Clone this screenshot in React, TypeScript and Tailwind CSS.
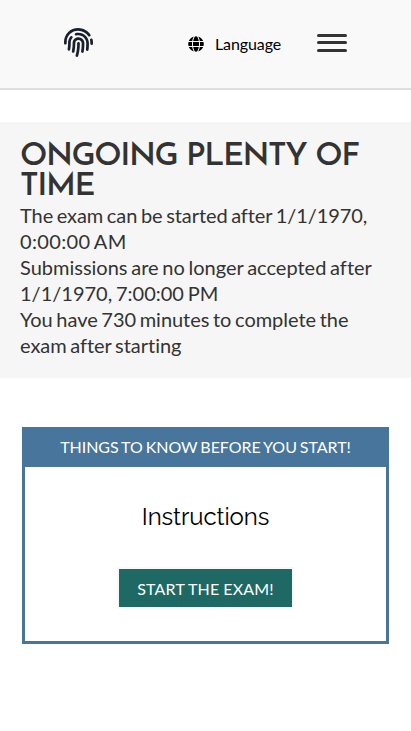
import { FaFingerprint, FaGlobe } from "react-icons/fa";

export default function App() {
  return (
    <div className="min-h-[731px] bg-white font-['Lato',sans-serif] text-black [font-variant-ligatures:none]">
      <header className="flex h-[90px] items-start border-b-2 border-[#dedede] bg-[#f9f9f9]">
        <FaFingerprint className="mt-7 ml-16 size-[29px] text-[#1a202c]" />
        <button className="mt-8 ml-[95px] flex items-center">
          <FaGlobe className="size-4" />
          <span className="ml-[11px] w-[66px] text-left text-base leading-6 tracking-[-0.1px]">Language</span>
        </button>
        <button className="mt-[34px] ml-9 flex w-[30px] flex-col" aria-label="Menu">
          <span className="h-[3px] w-full rounded-full bg-[#333]" />
          <span className="mt-1 h-[3px] w-full rounded-full bg-[#333]" />
          <span className="mt-[5px] h-[3px] w-full rounded-full bg-[#333]" />
        </button>
      </header>
      <section className="mt-8 h-64 bg-[#f6f6f6] px-5 pt-5 text-[#333]">
        <h1 className="font-['Josefin_Sans','Lato',sans-serif] text-[32px] leading-[30px] font-semibold tracking-[-1.43px]">ONGOING PLENTY OF TIME</h1>
        <div className="text-xl leading-[26px] [word-spacing:-1.4px]">
          <p>
            <span className="tracking-[-0.08px]">The exam can be started after 1/1/1970, </span>
            <span className="tracking-[0.35px]">0:00:00 AM</span>
          </p>
          <p>Submissions are no longer accepted after 1/1/1970, 7:00:00 PM</p>
          <p className="tracking-[-0.04px]">You have 730 minutes to complete the exam after starting</p>
        </div>
      </section>
      <main className="mx-[22px] mt-[49px] h-[217px] border-[3px] border-[#48759b] text-center">
        <h2 className="h-[37px] bg-[#48759b] pt-[5px] text-base leading-6 tracking-[-0.04px] text-white [word-spacing:-1.1px]">THINGS TO KNOW BEFORE YOU START!</h2>
        <p className="mt-8 font-['Raleway','Lato',sans-serif] text-2xl leading-9 tracking-[-0.1px]">Instructions</p>
        <button className="mt-8 h-[42px] w-[177px] border-2 border-[#f7f8fa] bg-[#1f6964] pt-0.5 text-base tracking-[0.2px] text-white [word-spacing:-0.5px]">START THE EXAM!</button>
      </main>
    </div>
  );
}
